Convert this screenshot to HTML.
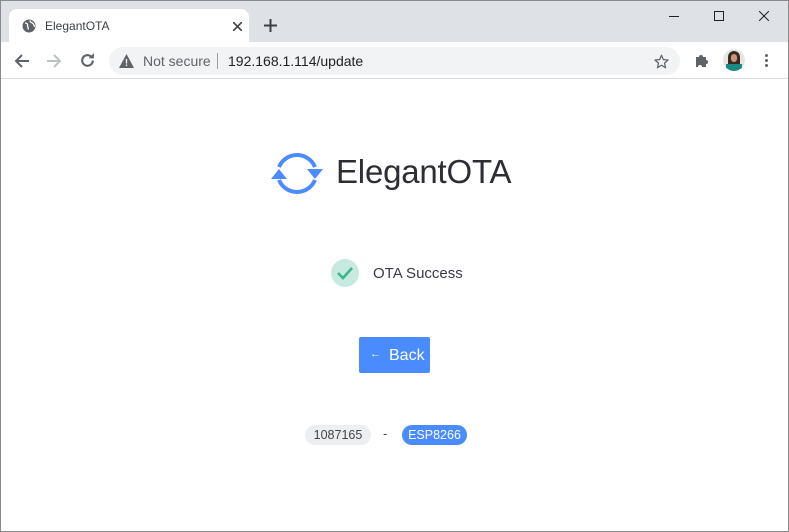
<!DOCTYPE html>
<html><head><meta charset="utf-8"><style>
*{margin:0;padding:0;box-sizing:border-box}
body{width:789px;height:532px;overflow:hidden;font-family:"Liberation Sans",sans-serif;background:#fff;position:relative}
.frame{position:absolute;inset:0;border:1px solid #8a8a8a;border-top:none}
.tabs{position:absolute;left:0;top:0;width:789px;height:42px;background:#dee1e6;border-top:1px solid #8a8a8a}
.tab{position:absolute;left:9px;top:8px;width:240px;height:34px;background:#fff;border-radius:8px 8px 0 0}
.toolbar{position:absolute;left:0;top:42px;width:789px;height:37px;background:#fff;border-bottom:1px solid #dadce0}
.omni{position:absolute;left:109px;top:5px;width:571px;height:28px;background:#f1f3f4;border-radius:14px}
.abs{position:absolute}
</style></head><body>
<div class="tabs">
 <div class="tab">
  <svg class="abs" style="left:13px;top:10px" width="14" height="14" viewBox="0 0 14 14"><circle cx="7" cy="7" r="6.5" fill="#5f6368"/><path d="M3 4c2 0 3 1 2.5 2.5S7 8 6 10.5M8 1.5c0 2 2 2 3 3s1 3 2 3" stroke="#fff" stroke-width="1.3" fill="none"/></svg>
  <span class="abs" style="left:36px;top:10px;font-size:12px;color:#3c4043">ElegantOTA</span>
  <svg class="abs" style="left:224px;top:13px" width="9" height="9" viewBox="0 0 9 9"><path d="M0 0L9 9M9 0L0 9" stroke="#3c4043" stroke-width="1.6"/></svg>
 </div>
 <svg class="abs" style="left:264px;top:18px" width="13" height="13" viewBox="0 0 13 13"><path d="M6.5 0v13M0 6.5h13" stroke="#3c4043" stroke-width="2"/></svg>
 <div class="abs" style="left:669px;top:15px;width:10px;height:1px;background:#222"></div>
 <div class="abs" style="left:714px;top:10px;width:10px;height:10px;border:1px solid #222"></div>
 <svg class="abs" style="left:759px;top:10px" width="10" height="10" viewBox="0 0 10 10"><path d="M0 0L10 10M10 0L0 10" stroke="#222" stroke-width="1"/></svg>
</div>
<div class="toolbar">
 <svg class="abs" style="left:14px;top:11px" width="16" height="16" viewBox="0 0 16 16"><path d="M15 8H2M8 2L2 8l6 6" stroke="#5f6368" stroke-width="2" fill="none"/></svg>
 <svg class="abs" style="left:46px;top:11px" width="16" height="16" viewBox="0 0 16 16"><path d="M1 8h13M8 2l6 6-6 6" stroke="#bdc1c6" stroke-width="2" fill="none"/></svg>
 <svg class="abs" style="left:79px;top:10px" width="17" height="17" viewBox="0 0 16 16"><path d="M13 8a5 5 0 1 1-1.5-3.6" stroke="#5f6368" stroke-width="2" fill="none"/><path d="M14 1v5H9z" fill="#5f6368"/></svg>
 <div class="omni">
  <svg class="abs" style="left:10px;top:7px" width="15" height="14" viewBox="0 0 15 14"><path d="M7.5 0L15 14H0z" fill="#5f6368"/><rect x="6.8" y="5" width="1.4" height="4.5" fill="#f1f3f4"/><rect x="6.8" y="10.5" width="1.4" height="1.5" fill="#f1f3f4"/></svg>
  <span class="abs" style="left:34px;top:6px;font-size:14px;color:#5f6368">Not secure</span>
  <div class="abs" style="left:108px;top:6px;width:1px;height:16px;background:#9aa0a6"></div>
  <span class="abs" style="left:119px;top:6px;font-size:14px;color:#202124">192.168.1.114/update</span>
  <svg class="abs" style="left:545px;top:7px" width="15" height="15" viewBox="0 0 24 24"><path d="M12 2l3 7 7.5.6-5.7 5 1.7 7.4L12 18l-6.5 4 1.7-7.4-5.7-5L9 9z" stroke="#5f6368" stroke-width="2" fill="none" stroke-linejoin="round"/></svg>
 </div>
 <svg class="abs" style="left:694px;top:10px" width="16" height="16" viewBox="0 0 16 16"><path d="M2 5h3a2 2 0 1 1 4 0h3v3a2 2 0 1 1 0 4v3H8a2 2 0 1 0-4 0H2z" fill="#5f6368"/></svg>
 <div class="abs" style="left:723px;top:7px;width:22px;height:22px;border-radius:50%;background:#e8e4e0;overflow:hidden"><div class="abs" style="left:5px;top:2px;width:12px;height:16px;border-radius:6px 6px 2px 2px;background:#3a2a22"></div><div class="abs" style="left:3px;top:15px;width:16px;height:8px;background:#1a8a80"></div><div class="abs" style="left:8px;top:5px;width:6px;height:8px;border-radius:3px;background:#c9977a"></div></div>
 <div class="abs" style="left:765px;top:12px;width:3px;height:3px;background:#5f6368;border-radius:50%;box-shadow:0 5px 0 #5f6368,0 10px 0 #5f6368"></div>
</div>

<svg class="abs" style="left:268px;top:147px" width="58" height="54" viewBox="0 0 58 54">
 <path d="M11 20A19.5 19.5 0 0 1 47 20" stroke="#4a8cff" stroke-width="4" fill="none"/>
 <path d="M47 33A19.5 19.5 0 0 1 11 33" stroke="#4a8cff" stroke-width="4" fill="none"/>
 <path d="M39 22h16l-8 10z" fill="#4a8cff"/>
 <path d="M3 32h16l-8-10z" fill="#4a8cff"/>
</svg>
<span class="abs" style="left:336px;top:153px;font-size:33px;color:#2d2d33;letter-spacing:-0.2px">ElegantOTA</span>

<div class="abs" style="left:331px;top:259px;width:28px;height:28px;border-radius:50%;background:#c6eadf"></div>
<svg class="abs" style="left:336px;top:265px" width="18" height="16" viewBox="0 0 18 16"><path d="M2 8l5 5 9-10" stroke="#3bb58a" stroke-width="2.5" fill="none"/></svg>
<span class="abs" style="left:373px;top:265px;font-size:15px;color:#3a3a48">OTA Success</span>

<div class="abs" style="left:359px;top:337px;width:71px;height:36px;background:#4a8cff;border-radius:2px;color:#fff">
 <span class="abs" style="left:11px;top:11px;font-size:11px">←</span>
 <span class="abs" style="left:30px;top:10px;font-size:16px">Back</span>
</div>

<div class="abs" style="left:305px;top:425px;width:66px;height:20px;border-radius:10px;background:#eceef1;font-size:12.5px;color:#444;text-align:center;line-height:20px">1087165</div>
<span class="abs" style="left:383px;top:426px;font-size:13px;color:#444">-</span>
<div class="abs" style="left:402px;top:425px;width:65px;height:20px;border-radius:10px;background:#4a8cff;font-size:12.5px;color:#fff;text-align:center;line-height:20px">ESP8266</div>
<div class="frame"></div>
</body></html>
